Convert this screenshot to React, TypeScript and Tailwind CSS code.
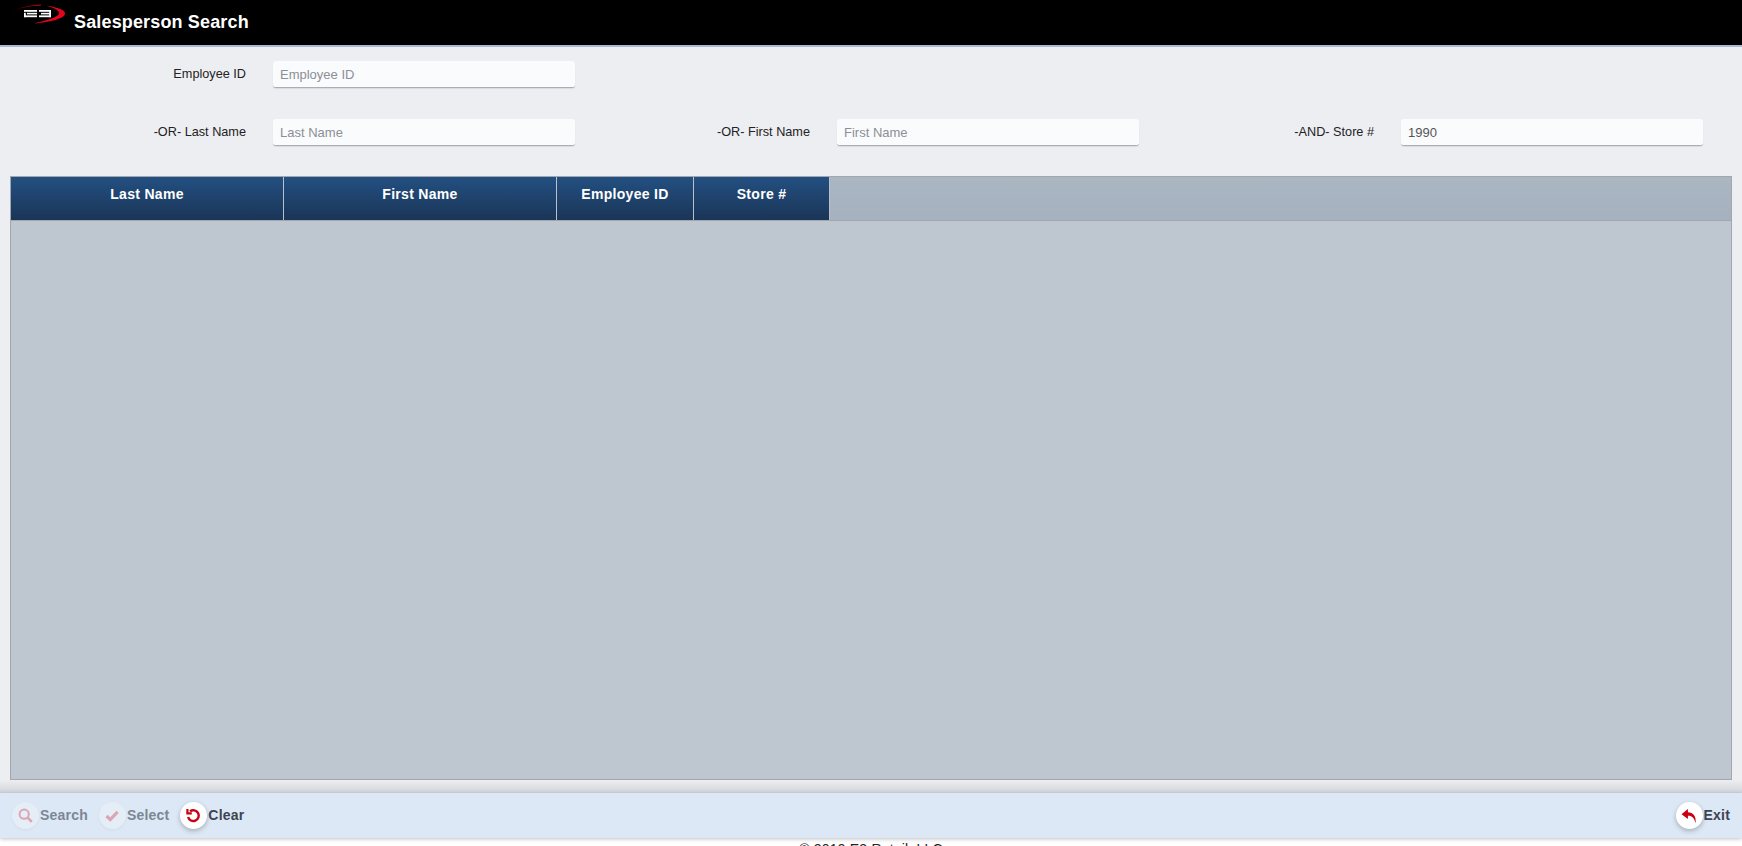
import type { ReactNode } from 'react';

function Logo() {
  return (
    <svg width="62" height="28" viewBox="0 0 62 28" className="absolute left-[5px] top-0">
      <defs>
        <linearGradient id="swooshTop" x1="0" y1="0" x2="1" y2="0">
          <stop offset="0" stopColor="#3a0006" />
          <stop offset="1" stopColor="#d0021b" />
        </linearGradient>
      </defs>
      <path d="M7 11.5 C15 7.5 26 5 36 4.6 L36 5.6 C26 6 15 8 7 11.5 Z" fill="url(#swooshTop)" />
      <path d="M41 5.5 C54 7.5 61 10.5 60 14 C59 18.5 46 22 29 23.5 C41 20.5 52 17.5 54 14 C55 11 50 8 41 5.5 Z" fill="#e3051b" />
      <g fill="#fff">
        <rect x="19" y="10" width="13" height="1.8" />
        <rect x="22" y="12.8" width="10" height="1.6" />
        <rect x="19" y="15.4" width="13" height="1.8" />
        <rect x="19" y="12.8" width="1.8" height="4.4" />
        <rect x="34" y="10" width="12" height="1.8" />
        <rect x="36" y="12.8" width="10" height="1.6" />
        <rect x="34" y="15.4" width="12" height="1.8" />
        <rect x="44.2" y="10" width="1.8" height="7.2" />
      </g>
    </svg>
  );
}

function Field({ label, placeholder, value, className }: { label: string; placeholder: string; value?: string; className: string }) {
  return (
    <div className={`flex items-center ${className}`}>
      <label className="flex-1 text-right text-[12.7px] text-[#222] pr-[27px]">{label}</label>
      <input
        readOnly
        value={value}
        placeholder={placeholder}
        className="w-[302px] h-[27px] px-[7px] text-[13px] text-[#555] placeholder:text-[#8b8f96] bg-[#fafbfd] rounded-[3px] border-b border-[#a9adb5] shadow-[0_1px_1px_rgba(0,0,0,0.08)] outline-none"
      />
    </div>
  );
}

function ToolButton({ label, icon, disabled }: { label: string; icon: ReactNode; disabled?: boolean }) {
  return (
    <div className="flex items-center">
      <span
        className={`flex items-center justify-center w-[27px] h-[27px] rounded-full ${
          disabled ? 'bg-white/25 shadow-[0_1px_3px_rgba(0,0,0,0.05)]' : 'bg-white shadow-[0_2px_5px_rgba(0,0,0,0.25)]'
        }`}
      >
        <span className={`flex ${disabled ? 'opacity-30' : ''}`}>{icon}</span>
      </span>
      <span className={`ml-[1px] text-[14px] font-bold tracking-[0.2px] ${disabled ? 'text-[#7d8693]' : 'text-[#3c4452]'}`}>{label}</span>
    </div>
  );
}

const columns = [
  { title: 'Last Name', width: 'w-[273px]' },
  { title: 'First Name', width: 'w-[273px]' },
  { title: 'Employee ID', width: 'w-[137px]' },
  { title: 'Store #', width: 'w-[136px]' },
];

export default function App() {
  return (
    <div className="relative flex flex-col h-[846px] overflow-hidden bg-[#edeef2] font-['Liberation_Sans',Arial,sans-serif]">
      <header className="relative flex items-center h-[47px] pb-[1px] shrink-0 bg-black border-b-2 border-[#a9b8cb] pl-[74px]">
        <Logo />
        <h1 className="text-[18px] font-bold tracking-[0.15px] text-white">Salesperson Search</h1>
      </header>

      <div className="flex items-start pt-[14px] h-[72px] shrink-0">
        <Field label="Employee ID" placeholder="Employee ID" className="w-[575px]" />
      </div>
      <div className="flex h-[27px] shrink-0">
        <Field label="-OR- Last Name" placeholder="Last Name" className="w-[575px]" />
        <Field label="-OR- First Name" placeholder="First Name" className="w-[564px]" />
        <Field label="-AND- Store #" placeholder="Store #" value="1990" className="w-[564px]" />
      </div>

      <div className="flex flex-col h-[604px] mt-[30px] mx-[10px] shrink-0 border border-[#a3a7ad] bg-[#bec6d0]">
        <div className="flex h-[44px] shrink-0 bg-gradient-to-b from-[#abb6c3] to-[#a6b1bf] border-b border-[#a3a7ad]">
          {columns.map((col) => (
            <div
              key={col.title}
              className={`${col.width} pt-[7px] text-center text-[14px] font-bold tracking-[0.3px] text-white bg-gradient-to-b from-[#235082] to-[#1a3557] border-r border-[#b9c0c9]`}
            >
              {col.title}
            </div>
          ))}
        </div>
      </div>

      <div className="h-[13px] shrink-0 bg-gradient-to-b from-[#edeef2] to-[#d3d5da]" />

      <footer className="relative flex items-center justify-between h-[45px] shrink-0 bg-[#dce8f5] pl-[12px] pr-[12px] shadow-[0_1px_4px_rgba(0,0,0,0.25)]">
        <div className="flex items-center gap-[11px]">
          <ToolButton
            disabled
            label="Search"
            icon={
              <svg width="15" height="15" viewBox="0 0 15 15" fill="none" stroke="#c9001a" strokeWidth="2">
                <circle cx="6.2" cy="6.2" r="4.6" />
                <path d="M9.6 9.6 L13.8 13.8" strokeWidth="2.6" />
              </svg>
            }
          />
          <ToolButton
            disabled
            label="Select"
            icon={
              <svg width="14" height="12" viewBox="0 0 14 12" fill="none" stroke="#c9001a" strokeWidth="3.2">
                <path d="M1.5 6 L5.3 9.6 L12.6 1.8" />
              </svg>
            }
          />
          <ToolButton
            label="Clear"
            icon={
              <svg width="15" height="15" viewBox="0 0 15 15" fill="none" stroke="#cc0011" strokeWidth="2.4">
                <path d="M4 3.4 A5.4 5.4 0 1 1 2.1 9" />
                <path d="M1.4 1 V5.4 H5.8" strokeWidth="2.2" />
              </svg>
            }
          />
        </div>
        <ToolButton
          label="Exit"
          icon={
            <svg width="16" height="16" viewBox="0 0 15 15" fill="#cc0011">
              <path d="M6.5 1 L0.5 5.8 L6.5 10.2 V7.2 C10 7 12.4 9 13.6 14.2 C14.6 8 11.5 4.2 6.5 4 Z" />
            </svg>
          }
        />
      </footer>

      <p className="pt-[1px] text-center text-[14px] tracking-[0.2px] text-[#222] bg-white flex-1">© 2019 E3 Retail, LLC</p>
    </div>
  );
}
